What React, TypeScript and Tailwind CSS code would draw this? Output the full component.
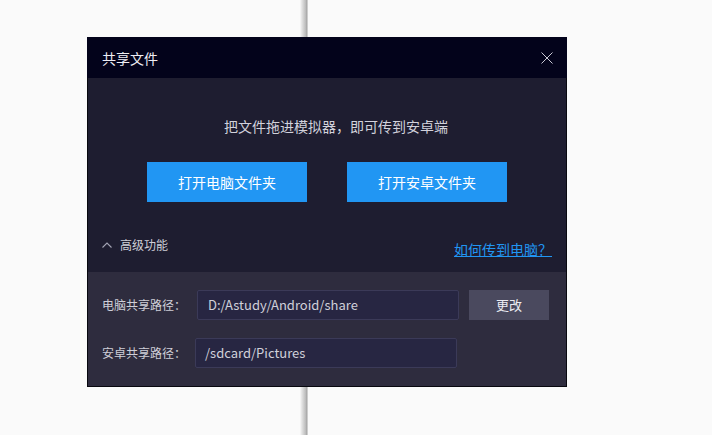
import React from "react";

const cjk = { fontFamily: '"Noto Sans CJK SC", "Noto Sans", sans-serif' };

export default function App() {
  return (
    <div
      className="w-[712px] h-[435px] overflow-hidden pt-[37px] pl-[87px] bg-[linear-gradient(to_right,#fafafa_300px,#ececec_301px,#b8b8b8_306px,#a0a0a0_307px,#fafafa_308px)]"
      style={cjk}
    >
      <div className="w-[480px] h-[350px] flex flex-col">
        {/* title bar */}
        <div className="h-[41px] bg-[#03031b] flex items-center justify-between pl-[15px] pr-[14px] shrink-0">
          <span className="text-[14px] text-[#eeeef4] leading-none">共享文件</span>
          <svg width="12" height="12" viewBox="0 0 12 12" className="block">
            <path d="M0.5 0.5 L11.5 11.5 M11.5 0.5 L0.5 11.5" stroke="#c8c8d4" strokeWidth="1" fill="none" />
          </svg>
        </div>
        {/* body */}
        <div className="flex-1 flex flex-col border border-t-0 border-[#08080f]">
          <div className="h-[194px] bg-[#1e1d30] flex flex-col items-center pt-[38px]">
            <div className="text-[14px] leading-[20px] text-[#d2d2dc] ml-[18px]">
              把文件拖进模拟器，即可传到安卓端
            </div>
            <div className="flex gap-[40px] mt-[26px]">
              <button className="w-[160px] h-[40px] bg-[#2196f3] text-white text-[14px]">打开电脑文件夹</button>
              <button className="w-[160px] h-[40px] bg-[#2196f3] text-white text-[14px]">打开安卓文件夹</button>
            </div>
            <div className="w-full flex items-start justify-between pl-[14px] pr-[14px] mt-[33px]">
              <div className="flex items-center gap-[8px]">
                <svg width="10" height="6" viewBox="0 0 10 6" className="block">
                  <path d="M0.5 5.5 L5 1 L9.5 5.5" stroke="#a4a4b4" strokeWidth="1.1" fill="none" />
                </svg>
                <span className="text-[12px] leading-[20px] text-[#cfcfd8]">高级功能</span>
              </div>
              <a className="text-[14px] leading-[20px] text-[#2196f3] underline mt-[4px]">如何传到电脑？</a>
            </div>
          </div>
          <div className="flex-1 bg-[#2e2c3e] flex flex-col gap-[18px] pt-[18px] pl-[14px]">
            <div className="flex items-center">
              <span className="text-[12px] text-[#cfcfd8] w-[95px]">电脑共享路径：</span>
              <div className="w-[262px] h-[30px] bg-[#272642] border border-[#3b3a58] rounded-[2px] flex items-center pl-[10px] text-[13px] text-[#d0d0da]">
                D:/Astudy/Android/share
              </div>
              <button className="ml-[10px] w-[80px] h-[30px] bg-[#4a495e] text-[13px] text-[#ececf2]">更改</button>
            </div>
            <div className="flex items-center">
              <span className="text-[12px] text-[#cfcfd8] w-[93px]">安卓共享路径：</span>
              <div className="w-[262px] h-[30px] bg-[#272642] border border-[#3b3a58] rounded-[2px] flex items-center pl-[9px] text-[13px] text-[#d0d0da]">
                /sdcard/Pictures
              </div>
            </div>
          </div>
        </div>
      </div>
    </div>
  );
}
